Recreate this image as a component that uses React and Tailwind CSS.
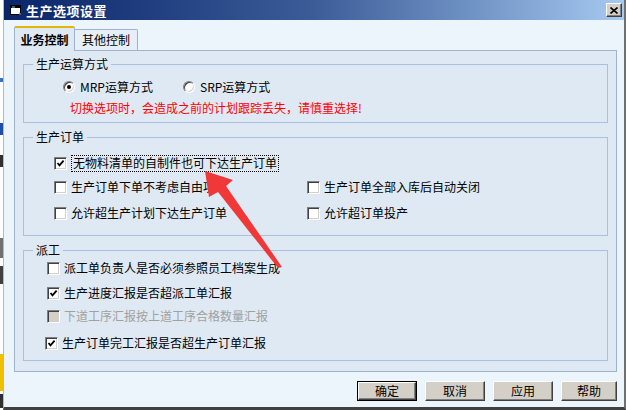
import React from "react";

const font = { fontFamily: '"Noto Sans CJK SC", "Noto Sans", sans-serif' };

function CheckBox({ checked, disabled }) {
  return (
    <span
      className={`w-[13px] h-[13px] shrink-0 flex items-center justify-center border border-t-[#808080] border-l-[#808080] border-b-white border-r-white shadow-[inset_1px_1px_0_#404040,inset_-1px_-1px_0_#d4d0c8] ${disabled ? "bg-[#d4d0c8]" : "bg-white"}`}
    >
      {checked && (
        <svg width="9" height="9" viewBox="0 0 9 9">
          <path d="M1.5 4 L3.5 6.3 L7.6 1.6" stroke="#000" strokeWidth="1.8" fill="none" />
        </svg>
      )}
    </span>
  );
}

function Radio({ checked }) {
  return (
    <span className="w-[12px] h-[12px] shrink-0 rounded-full flex items-center justify-center bg-white border border-t-[#808080] border-l-[#808080] border-b-white border-r-white shadow-[inset_1px_1px_0_#404040,inset_-1px_-1px_0_#d4d0c8]">
      {checked && <span className="w-[4px] h-[4px] rounded-full bg-black" />}
    </span>
  );
}

function Row({ checked, disabled, children, className = "" }) {
  return (
    <div className={`flex items-center h-[14px] gap-[4px] ${className}`}>
      <CheckBox checked={checked} disabled={disabled} />
      <span className={`leading-[14px] whitespace-nowrap ${disabled ? "text-[#a0a0a0]" : "text-black"}`}>
        {children}
      </span>
    </div>
  );
}

function Group({ title, className = "", children }) {
  return (
    <fieldset className={`mx-[8px] border border-[#a9c1de] ${className}`}>
      <legend className="ml-[9px] px-[3px] text-[12px] leading-[12px] text-black">{title}</legend>
      {children}
    </fieldset>
  );
}

function Btn({ children, def, w = "w-[60px]" }) {
  return (
    <div className={`${w} h-[20px] ${def ? "border border-black" : ""}`}>
      <div className="w-full h-full flex items-center justify-center bg-[#d4d0c8] border border-t-white border-l-white border-b-[#404040] border-r-[#404040] shadow-[inset_-1px_-1px_0_#808080] text-[12px] text-black leading-none">
        {children}
      </div>
    </div>
  );
}

export default function App() {
  return (
    <div className="w-[626px] h-[410px] flex bg-white relative overflow-hidden text-[12px]" style={font}>
      {/* background app peeking on the left */}
      <div className="w-[3px] flex flex-col">
        <div className="h-[78px]" />
        <div className="h-[4px] bg-[#3a6fd0]" />
        <div className="h-[41px]" />
        <div className="h-[12px] bg-[#1f4fa8]" />
        <div className="h-[20px]" />
        <div className="h-[12px] bg-[#303030]" />
        <div className="h-[71px]" />
        <div className="h-[20px] bg-[#707070]" />
        <div className="h-[8px]" />
        <div className="h-[18px] bg-[#404040]" />
        <div className="h-[70px]" />
        <div className="h-[37px] bg-[#f0c000]" />
        <div className="h-[3px]" />
        <div className="h-[14px] bg-[#303030]" />
      </div>

      {/* dialog */}
      <div className="flex-1 flex flex-col border-l border-[#b8b8b8] border-r-[2px] border-r-[#707070] border-b-[3px] border-b-[#404040]">
        <div className="h-[20px] flex items-center bg-linear-to-r from-[#0a246a] via-[#3c5c98] to-[#a6caf0] pl-[6px] pr-[2px]">
          <svg width="12" height="12" viewBox="0 0 12 12" className="shrink-0">
            <rect x="0.5" y="1.5" width="10" height="9" fill="#fff" stroke="#000" />
            <rect x="1" y="2" width="9" height="2" fill="#000" />
            <rect x="2" y="2.5" width="3" height="1" fill="#4fd0e8" />
            <path d="M9 8 L11.5 10.5 L9 10.5 Z" fill="#9ab" />
          </svg>
          <span className="ml-[4px] text-white font-bold text-[13px] leading-none tracking-[0.5px]">生产选项设置</span>
          <div className="flex-1" />
          <div className="w-[16px] h-[14px] flex items-center justify-center bg-[#d4d0c8] border border-t-white border-l-white border-b-[#404040] border-r-[#404040] shadow-[inset_-1px_-1px_0_#808080]">
            <svg width="8" height="7" viewBox="0 0 8 7">
              <path d="M0.5 0.5 L7.5 6.5 M7.5 0.5 L0.5 6.5" stroke="#000" strokeWidth="1.6" />
            </svg>
          </div>
        </div>

        <div className="flex-1 bg-[#ecf4fc] pt-[6px] pl-[10px] pr-[7px] flex flex-col">
          {/* tabs */}
          <div className="flex items-end h-[24px]">
            <div className="relative z-10 w-[61px] h-[25px] -mb-px flex items-center justify-center bg-[#dfe9f3] border-x border-[#9fb4cc] border-t-2 border-t-[#e0b800] rounded-t-[2px] font-bold text-black">
              业务控制
            </div>
            <div className="w-[63px] h-[21px] flex items-center justify-center bg-[#e6eff8] border-t border-r border-[#9fb4cc] rounded-tr-[2px] text-black">
              其他控制
            </div>
          </div>

          {/* panel */}
          <div className="h-[322px] border border-[#9fb4cc] bg-[#dfe9f3] pt-[7px] flex flex-col">
            <Group title="生产运算方式" className="h-[65px]">
              <div className="flex items-center h-[14px] mt-[10px] pl-[39px]">
                <div className="w-[120px] flex items-center gap-[5px]">
                  <Radio checked />
                  <span className="leading-[14px]">MRP运算方式</span>
                </div>
                <div className="flex items-center gap-[5px]">
                  <Radio />
                  <span className="leading-[14px]">SRP运算方式</span>
                </div>
              </div>
              <div className="mt-[7px] pl-[46px] h-[14px] leading-[14px] text-[#ff0000] whitespace-nowrap">
                切换选项时，会造成之前的计划跟踪丢失，请慎重选择!
              </div>
            </Group>

            <Group title="生产订单" className="mt-[8px] h-[105px]">
              <div className="pl-[30px] mt-[13px] flex items-center h-[14px] gap-[4px]">
                <CheckBox checked />
                <span className="h-[17px] px-[1px] flex items-center border border-dotted border-black leading-none whitespace-nowrap">
                  无物料清单的自制件也可下达生产订单
                </span>
              </div>
              <div className="pl-[30px] mt-[10px] grid grid-cols-[253px_1fr]">
                <Row>生产订单下单不考虑自由项</Row>
                <Row>生产订单全部入库后自动关闭</Row>
              </div>
              <div className="pl-[30px] mt-[12px] grid grid-cols-[253px_1fr]">
                <Row>允许超生产计划下达生产订单</Row>
                <Row>允许超订单投产</Row>
              </div>
            </Group>

            <Group title="派工" className="mt-[8px] h-[117px]">
              <Row className="ml-[23px] mt-[5px]">派工单负责人是否必须参照员工档案生成</Row>
              <Row checked className="ml-[23px] mt-[11px]">生产进度汇报是否超派工单汇报</Row>
              <Row disabled className="ml-[23px] mt-[9px]">下道工序汇报按上道工序合格数量汇报</Row>
              <Row checked className="ml-[21px] mt-[13px]">生产订单完工汇报是否超生产订单汇报</Row>
            </Group>
          </div>

          {/* buttons */}
          <div className="mt-[9px] flex justify-end gap-[8px]">
            <Btn def>确定</Btn>
            <Btn>取消</Btn>
            <Btn>应用</Btn>
            <Btn w="w-[56px]">帮助</Btn>
          </div>
        </div>
      </div>

      {/* annotation arrow */}
      <svg className="absolute inset-0 pointer-events-none" width="626" height="410">
        <polygon
          points="205,171 233,180 226,186 282,267 278,268 218,192 209,197"
          fill="#f03838"
        />
      </svg>
    </div>
  );
}
